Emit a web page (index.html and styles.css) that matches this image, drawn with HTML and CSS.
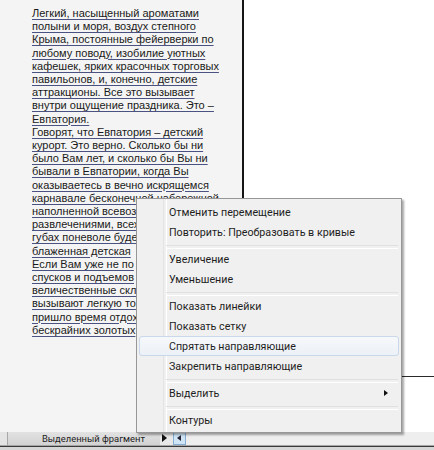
FILE: index.html
```html
<!DOCTYPE html>
<html lang="ru">
<head>
<meta charset="utf-8">
<title>Контекстное меню</title>
<link rel="stylesheet" href="styles.css">
</head>
<body>
<div class="app">
  <div class="workspace">
    <div class="textpanel">
      <p class="story">Легкий, насыщенный ароматами<br>полыни и моря, воздух степного<br>Крыма, постоянные фейерверки по<br>любому поводу, изобилие уютных<br>кафешек, ярких красочных торговых<br>павильонов, и, конечно, детские<br>аттракционы. Все это вызывает<br>внутри ощущение праздника. Это –<br>Евпатория.<br>Говорят, что Евпатория – детский<br>курорт. Это верно. Сколько бы ни<br>было Вам лет, и сколько бы Вы ни<br>бывали в Евпатории, когда Вы<br>оказываетесь в вечно искрящемся<br>карнавале бесконечной набережной<br>наполненной всевоз<br>развлечениями, всех<br>губах поневоле буде<br>блаженная детская<br>Если Вам уже не по<br>спусков и подъемов<br>величественные скл<br>вызывают легкую то<br>пришло время отдох<br>бескрайних золотых</p>
    </div>
    <div class="pagearea">
      <div class="page"></div>
    </div>
  </div>
  <div class="statusbar">
    <div class="bar">
      <div class="cell-first"></div>
      <div class="cell-tab">Выделенный фрагмент</div>
      <div class="play"></div>
      <div class="navbtn"><span class="navtri"></span></div>
      <div class="cell-rest"></div>
    </div>
    <div class="bar-rule"></div>
    <div class="bar-bottom"></div>
  </div>

  <div class="menu">
    <div class="item">Отменить перемещение</div>
    <div class="item">Повторить: Преобразовать в кривые</div>
    <div class="sep"></div>
    <div class="item">Увеличение</div>
    <div class="item">Уменьшение</div>
    <div class="sep"></div>
    <div class="item">Показать линейки</div>
    <div class="item">Показать сетку</div>
    <div class="item hover">Спрятать направляющие</div>
    <div class="item">Закрепить направляющие</div>
    <div class="sep"></div>
    <div class="item sub">Выделить<span class="arrow"></span></div>
    <div class="sep"></div>
    <div class="item">Контуры</div>
  </div>
</div>
</body>
</html>
```

FILE: styles.css
```css
* { box-sizing: border-box; }
html, body { margin: 0; padding: 0; }
body {
  width: 434px;
  height: 450px;
  overflow: hidden;
  background: #ffffff;
  font-family: "Liberation Sans", Arial, sans-serif;
}
.app {
  position: relative;
  width: 434px;
  height: 450px;
  display: flex;
  flex-direction: column;
}
.workspace {
  height: 432px;
  display: flex;
}
.textpanel {
  width: 242px;
  background: #f4f4f4;
  padding: 7px 0 0 32px;
  overflow: hidden;
}
.story {
  margin: 0;
  font-size: 11px;
  line-height: 13.2px;
  color: #1a1a1a;
  white-space: nowrap;
  text-decoration: underline;
  text-decoration-color: #4a5282;
  text-underline-offset: 2px;
}
.pagearea {
  flex: 1;
  background: #ffffff;
}
.page {
  height: 377px;
  border-left: 2px solid #151515;
  border-bottom: 1px solid #2a2a2a;
}

/* status bar */
.statusbar {
  height: 18px;
  display: flex;
  flex-direction: column;
}
.bar {
  height: 13px;
  display: flex;
  align-items: stretch;
  background: #ececec;
}
.cell-first {
  width: 8px;
  background: #e4e4e4;
  border-right: 1px solid #a8a8a8;
}
.cell-tab {
  width: 152px;
  background: linear-gradient(#e2e2e2, #d2d2d2);
  font-family: Roboto, "Noto Sans", sans-serif;
  font-size: 9.4px;
  line-height: 13px;
  color: #222;
  padding-left: 34px;
  white-space: nowrap;
}
.play {
  width: 13px;
  position: relative;
  background: #e8e8e8;
}
.play::after {
  content: "";
  position: absolute;
  left: 2px;
  top: 2px;
  border-left: 5px solid #111;
  border-top: 4.5px solid transparent;
  border-bottom: 4.5px solid transparent;
}
.navbtn {
  width: 13px;
  background: #cfe5f6;
  border: 1px solid #86aed3;
  position: relative;
}
.navtri {
  position: absolute;
  left: 3px;
  top: 2px;
  border-right: 4px solid #223;
  border-top: 3px solid transparent;
  border-bottom: 3px solid transparent;
}
.cell-rest {
  flex: 1;
  background: #eeeeee;
}
.bar-rule {
  height: 2px;
  border-top: 1px solid #a5a5a5;
  border-bottom: 1px solid #3a3a3a;
}
.bar-bottom {
  flex: 1;
  background: #d6d6d6;
}

/* context menu */
.menu {
  position: absolute;
  left: 136px;
  top: 198px;
  width: 266px;
  height: 235px;
  padding: 3px 2px 2px 2px;
  background: #f0f0f0;
  border: 1px solid #979797;
  box-shadow: 2px 2px 2px rgba(0, 0, 0, 0.35);
  font-family: Roboto, "Noto Sans", sans-serif;
  font-size: 10.7px;
  color: #1e1e1e;
}
.menu::before {
  content: "";
  position: absolute;
  left: 26px;
  top: 0;
  bottom: 0;
  width: 2px;
  border-left: 1px solid #e2e3e3;
  border-right: 1px solid #ffffff;
}
.item {
  position: relative;
  height: 20px;
  line-height: 19px;
  padding-left: 29px;
  white-space: nowrap;
  border: 1px solid transparent;
  border-radius: 3px;
}
.item.hover {
  background: linear-gradient(#f6f8fb, #ecf1f7);
  border-color: #c9d8ea;
}
.sep {
  position: relative;
  height: 7px;
  margin-left: 27px;
  margin-right: 1px;
}
.sep::after {
  content: "";
  position: absolute;
  left: 0;
  right: 0;
  top: 3px;
  height: 2px;
  border-top: 1px solid #e0e0e0;
  border-bottom: 1px solid #ffffff;
}
.arrow {
  position: absolute;
  right: 10px;
  top: 6px;
  border-left: 4px solid #111;
  border-top: 3.5px solid transparent;
  border-bottom: 3.5px solid transparent;
}
```
